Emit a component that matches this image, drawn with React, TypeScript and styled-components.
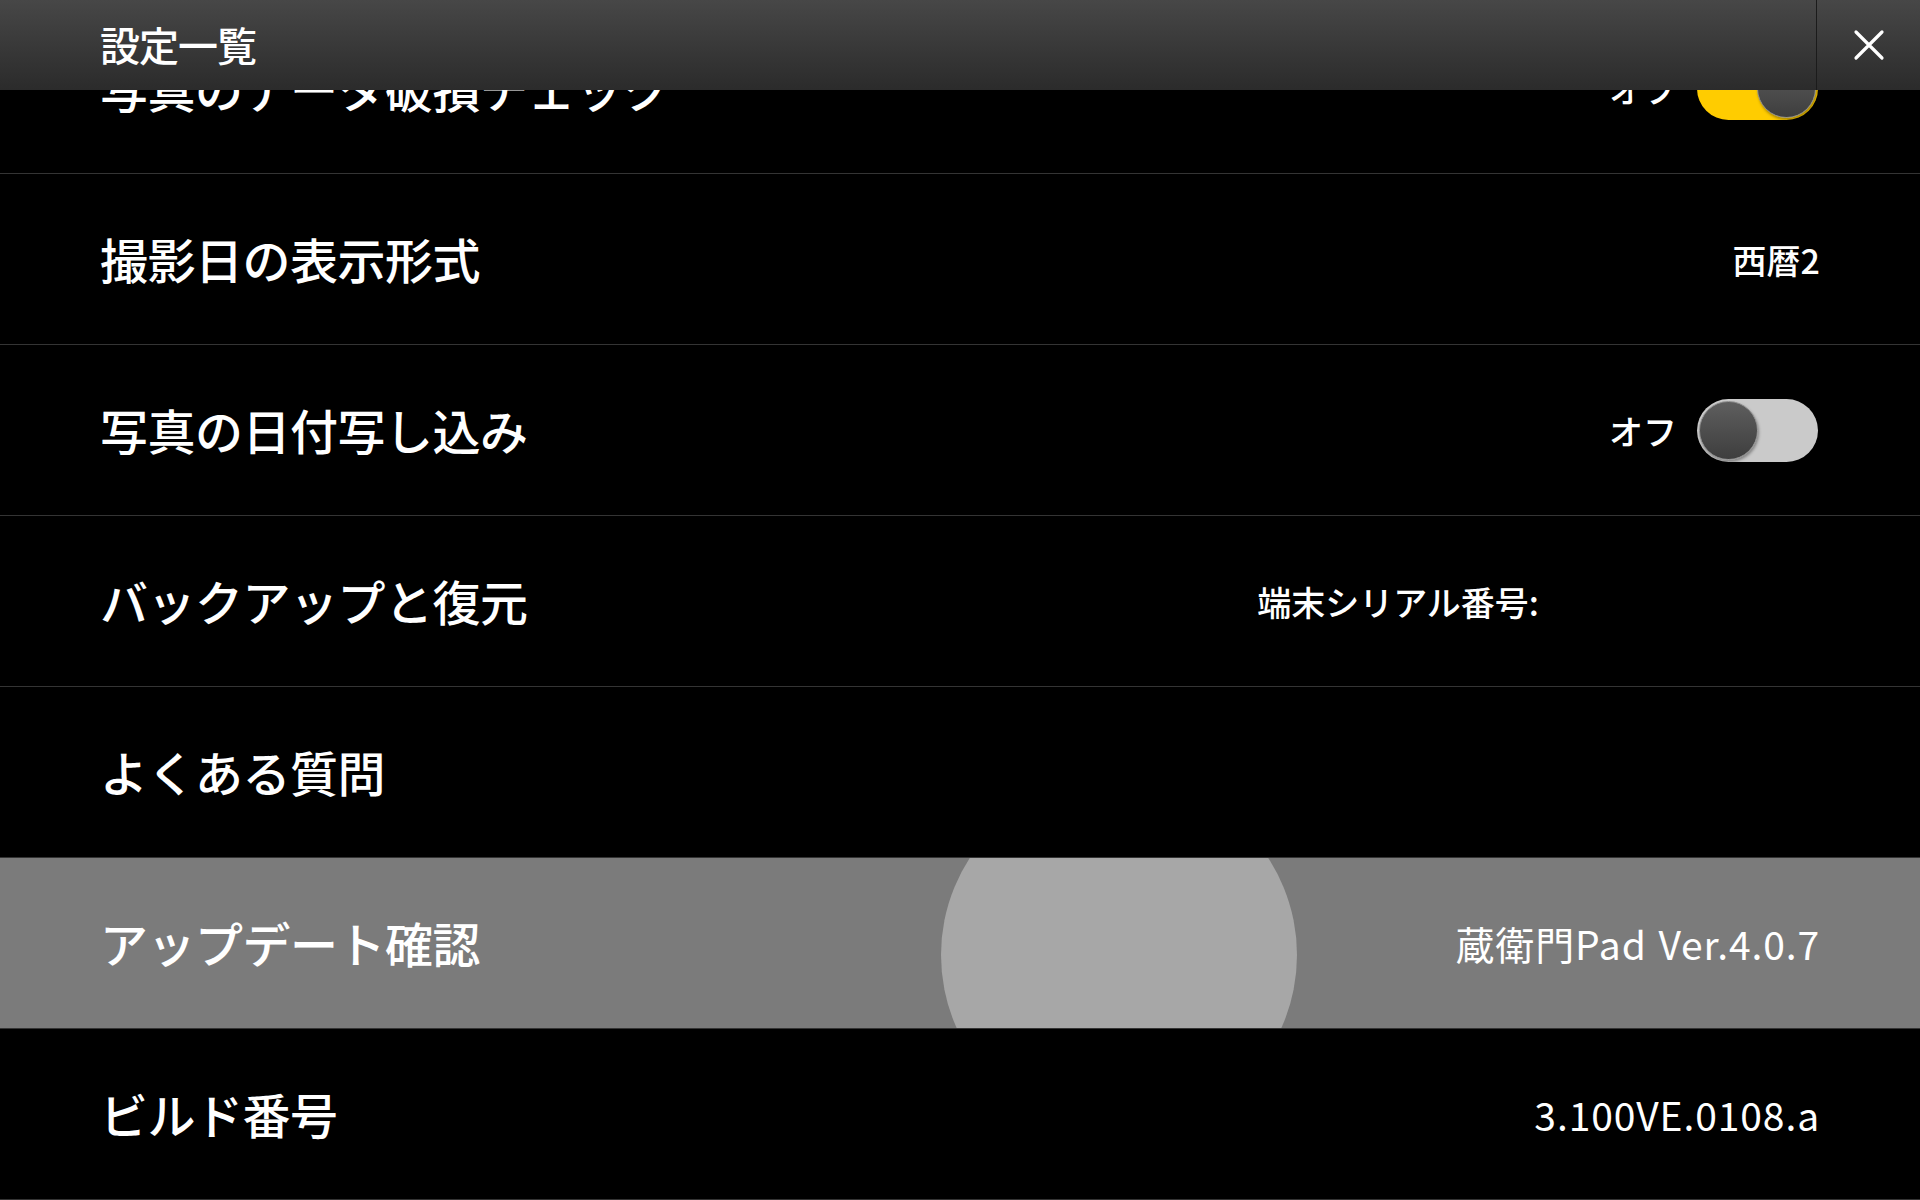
import React from 'react';
import styled, {createGlobalStyle, css} from 'styled-components';

const GlobalStyle = createGlobalStyle`
	html, body {
		margin: 0;
		padding: 0;
		background: #000;
	}
	body {
		font-family: 'Noto Sans CJK JP', 'Noto Sans', sans-serif;
		color: #fff;
	}
	* {
		box-sizing: border-box;
	}
`;

const Screen = styled.div`
	position: relative;
	width: 1920px;
	height: 1200px;
	overflow: hidden;
	background: #000;
`;

const Header = styled.header`
	position: absolute;
	top: 0;
	left: 0;
	right: 0;
	z-index: 2;
	height: 90px;
	display: flex;
	align-items: stretch;
	background: linear-gradient(to bottom, #474747 0%, #2b2b2b 100%);
`;

const HeaderTitle = styled.h1`
	flex: 1;
	margin: 0;
	padding-left: 100px;
	padding-bottom: 2px;
	display: flex;
	align-items: center;
	font-size: 40px;
	font-weight: 500;
	letter-spacing: -1px;
	color: #fff;
`;

const CloseButton = styled.button`
	width: 104px;
	border: none;
	border-left: 1px solid #1b1b1b;
	background: transparent;
	display: flex;
	align-items: center;
	justify-content: center;
	padding: 0;
	cursor: pointer;
`;

const List = styled.ul`
	list-style: none;
	margin: 0;
	padding: 3px 0 0;
`;

const Row = styled.li<{$active?: boolean}>`
	position: relative;
	overflow: hidden;
	height: 171px;
	display: flex;
	align-items: center;
	padding: 0 102px 0 100px;
	border-bottom: 1px solid #343434;
	background: ${({$active}) => ($active ? '#7b7b7b' : '#000')};
`;

const Ripple = styled.span`
	position: absolute;
	left: 941px;
	top: -81px;
	width: 356px;
	height: 356px;
	border-radius: 50%;
	background: #a7a7a7;
`;

const Title = styled.span`
	position: relative;
	margin-top: -3px;
	font-size: 48px;
	font-weight: 500;
	letter-spacing: -0.5px;
	white-space: nowrap;
`;

const Value = styled.span<{$inset?: number}>`
	position: relative;
	margin-left: auto;
	margin-right: ${({$inset}) => ($inset ?? 0) - 2}px;
	font-size: 34px;
	font-weight: 500;
	white-space: nowrap;
`;

const Version = styled(Value)`
	font-size: 39px;
	font-weight: 400;
	letter-spacing: 0.9px;
	word-spacing: 2px;
`;

const SwitchGroup = styled.div`
	margin-left: auto;
	display: flex;
	align-items: center;
	gap: 20px;
`;

const SwitchLabel = styled.span`
	font-size: 34px;
	font-weight: 500;
`;

const Track = styled.div<{$on: boolean}>`
	position: relative;
	width: 121px;
	height: 63px;
	border-radius: 32px;
	display: flex;
	align-items: center;
	padding: 0 2px;
	justify-content: ${({$on}) => ($on ? 'flex-end' : 'flex-start')};
	${({$on}) =>
		$on
			? css`
					background: #ffcc00;
			  `
			: css`
					background: #cacaca;
			  `}
`;

const Knob = styled.span`
	width: 59px;
	height: 59px;
	border-radius: 50%;
	background: linear-gradient(to bottom, #5e5e5e 0%, #3e3e3e 100%);
	border: 1px solid #8d8d8d;
	box-shadow: 1px 2px 3px rgba(0, 0, 0, 0.35);
`;

const Toggle: React.FC<{on: boolean; label: string}> = ({on, label}) => (
	<SwitchGroup>
		<SwitchLabel>{label}</SwitchLabel>
		<Track $on={on}>
			<Knob />
		</Track>
	</SwitchGroup>
);

const CloseIcon = () => (
	<svg width="32" height="32" viewBox="0 0 32 32">
		<path
			d="M3 3 L29 29 M29 3 L3 29"
			stroke="#fff"
			strokeWidth="3.2"
			strokeLinecap="round"
			fill="none"
		/>
	</svg>
);

export default function App() {
	return (
		<Screen>
			<GlobalStyle />
			<Header>
				<HeaderTitle>設定一覧</HeaderTitle>
				<CloseButton aria-label="閉じる">
					<CloseIcon />
				</CloseButton>
			</Header>
			<List>
				<Row>
					<Title>写真のデータ破損チェック</Title>
					<Toggle on label="オフ" />
				</Row>
				<Row>
					<Title>撮影日の表示形式</Title>
					<Value>西暦2</Value>
				</Row>
				<Row>
					<Title>写真の日付写し込み</Title>
					<Toggle on={false} label="オフ" />
				</Row>
				<Row>
					<Title>バックアップと復元</Title>
					<Value $inset={281}>端末シリアル番号:</Value>
				</Row>
				<Row>
					<Title>よくある質問</Title>
				</Row>
				<Row $active>
					<Ripple />
					<Title>アップデート確認</Title>
					<Version>蔵衛門Pad Ver.4.0.7</Version>
				</Row>
				<Row>
					<Title>ビルド番号</Title>
					<Version>3.100VE.0108.a</Version>
				</Row>
			</List>
		</Screen>
	);
}
